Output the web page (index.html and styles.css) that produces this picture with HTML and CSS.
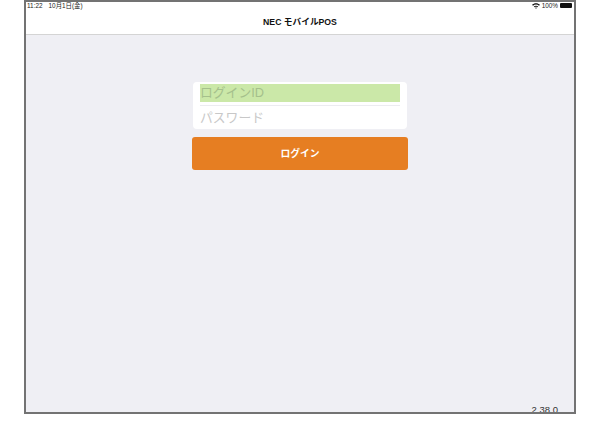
FILE: index.html
```html
<!DOCTYPE html>
<html lang="ja">
<head>
<meta charset="utf-8">
<title>NEC モバイルPOS</title>
<link rel="stylesheet" href="styles.css">
</head>
<body>
<div class="device">
  <header class="header">
    <div class="status">
      <span class="status-time"><span class="clock">11:22</span>10月1日(金)</span>
      <span class="status-right">
        <svg class="wifi" width="8" height="6" viewBox="0 0 8 6"><path d="M0 1.8C2.2-.4 5.800-.4 8 1.800L7 2.800C5.300 1.200 2.700 1.200 1 2.800Z" fill="#111"/><path d="M1.800 3.500C3 2.400 5 2.400 6.200 3.500L5.300 4.300C4.500 3.700 3.500 3.700 2.700 4.300Z" fill="#111"/><path d="M3.200 4.900C3.700 4.500 4.300 4.500 4.800 4.900L4 5.800Z" fill="#111"/></svg>
        <span>100%</span>
        <span class="battery"></span>
      </span>
    </div>
    <div class="title">NEC モバイルPOS</div>
  </header>
  <main class="main">
    <div class="form">
      <div class="card">
        <div class="field field-id">ログインID</div>
        <div class="divider"></div>
        <div class="field field-pw">パスワード</div>
      </div>
      <button class="login" type="button">ログイン</button>
    </div>
    <div class="version">2.38.0</div>
  </main>
</div>
</body>
</html>
```
FILE: styles.css
```css
* { box-sizing: border-box; }
html, body { margin: 0; padding: 0; background: #fff; }
body {
  width: 600px;
  height: 432px;
  overflow: hidden;
  font-family: "Liberation Sans", "Noto Sans CJK JP", sans-serif;
}
.device {
  width: 552px;
  height: 414px;
  margin-left: 24px;
  border: 2px solid #737373;
  display: flex;
  flex-direction: column;
  background: #efeff4;
  overflow: hidden;
}
.header {
  height: 33px;
  flex: none;
  background: #fff;
  border-bottom: 1px solid #d4d4d4;
  display: flex;
  flex-direction: column;
}
.status {
  height: 7px;
  display: flex;
  justify-content: space-between;
  align-items: center;
  padding: 0 2px 0 1px;
  font-size: 6.400px;
  line-height: 7px;
  color: #222;
}
.clock { margin-right: 6px; }
.status-right { display: flex; align-items: center; gap: 2px; }
.wifi { display: block; }
.battery {
  width: 12px;
  height: 5px;
  background: #111;
  border-radius: 1px;
}
.title {
  text-align: center;
  font-size: 8.700px;
  font-weight: 700;
  line-height: 11px;
  margin-top: 8px;
  color: #111;
}
.main {
  flex: 1;
  position: relative;
  display: flex;
  flex-direction: column;
  align-items: center;
  padding-top: 47px;
}
.form {
  width: 216px;
  display: flex;
  flex-direction: column;
  align-items: center;
  gap: 8px;
}
.card {
  width: 214px;
  height: 47px;
  background: #fff;
  border-radius: 4px;
  padding: 2px 7px 0;
}
.field {
  height: 18px;
  font-size: 12.800px;
  line-height: 18px;
  color: #c8c8c8;
}
.field-id {
  background: #cbe8a8;
  color: #a5c08c;
}
.field-pw { line-height: 20px; }
.divider {
  height: 1px;
  margin: 3px 0 2px;
  background: #ececf0;
}
.login {
  display: block;
  width: 216px;
  height: 33px;
  padding: 0;
  border: 0;
  border-radius: 3px;
  background: #e67e22;
  color: #fff;
  font: 700 9.800px/33px "Liberation Sans", "Noto Sans CJK JP", sans-serif;
  text-align: center;
}
.version {
  position: absolute;
  right: 16px;
  bottom: -3px;
  font-size: 9.500px;
  line-height: 11px;
  color: #333;
}
```
